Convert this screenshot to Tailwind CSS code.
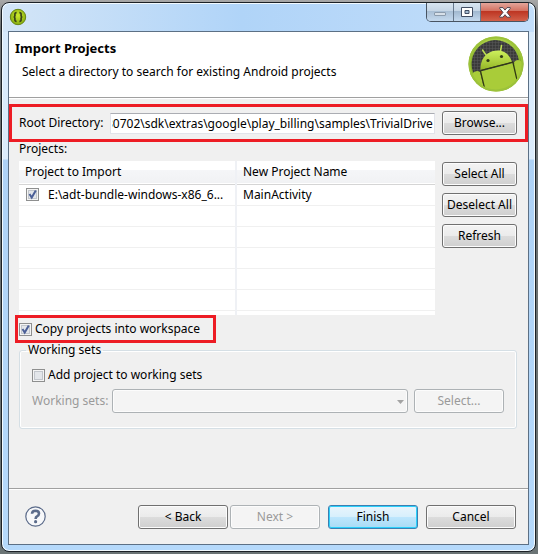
<!DOCTYPE html>
<html lang="en">
<head>
    <meta charset="UTF-8">
    <meta name="viewport" content="width=device-width, initial-scale=1.0">
    <title>Import Projects</title>
    <script src="https://cdn.jsdelivr.net/npm/@tailwindcss/browser@4"></script>
</head>
<body class="min-h-screen flex flex-col pt-[2px] pb-[2px] pl-px pr-[2px] bg-linear-to-b from-[#a8a8a8] via-[#6b6f70] via-5% to-[#6b7475] font-['Noto_Sans',sans-serif] text-[13px] leading-4 text-black">

    <!-- window frame -->
    <div class="flex-1 flex flex-col rounded-lg border border-[#1c2126] px-[6px] pb-[6px] bg-[linear-gradient(#d6e9fb_0,#dcecfb_156px,#aed2f6_157px,#b5d9fb_100%)] shadow-[inset_0_0_0_1px_#f2faff]">

        <header class="h-7 flex items-start justify-between pl-[6px] pr-[5px] -mx-[5px] mt-px -mb-px rounded-t-lg bg-linear-to-r from-[#d3e5f7] via-[#b0d4f8] via-45% to-[#c3defa]">
            <svg class="w-[18px] h-[18px] mt-1" viewBox="0 0 18 18" aria-hidden="true">
                <defs>
                    <radialGradient id="badge" cx=".5" cy=".4" r=".6">
                        <stop offset="0" stop-color="#cdea2c"/>
                        <stop offset="1" stop-color="#86ac10"/>
                    </radialGradient>
                </defs>
                <circle cx="9" cy="9" r="7.7" fill="url(#badge)" stroke="#688613"/>
                <path d="M7.6 4.6Q5.8 4.6 5.9 6.4V7.7Q5.9 8.9 4.7 9Q5.9 9.1 5.9 10.3V11.6Q5.8 13.4 7.6 13.4M10.4 4.6Q12.2 4.6 12.1 6.4V7.7Q12.1 8.9 13.3 9Q12.1 9.1 12.1 10.3V11.6Q12.2 13.4 10.4 13.4" fill="none" stroke="#394318" stroke-width="1.7"/>
            </svg>
            <div class="flex h-[19px] -mt-px rounded-b-[5px] border border-t-0 border-[#485462] overflow-hidden">
                <button aria-label="Minimize" class="w-[27px] flex items-center justify-center bg-[linear-gradient(#d8e5f1,#c5d5e5_45%,#a9bfd5_46%,#c4d9ee)] border-r border-[#66788c]">
                    <svg class="w-3 h-3" viewBox="0 0 12 12"><rect x=".5" y="6.5" width="11" height="3" rx=".5" fill="#d7e0e9" stroke="#8c9cad"/></svg>
                </button>
                <button aria-label="Maximize" class="w-[27px] flex items-center justify-center bg-[linear-gradient(#d8e5f1,#c5d5e5_45%,#a1b8cf_46%,#c4d9ee)] border-r border-[#66788c]">
                    <svg class="w-3 h-[11px]" viewBox="0 0 12 11"><path d="M.5.5H11.5V9.5H.5ZM4 3.5H8V6.5H4Z" fill="#fff" fill-rule="evenodd" stroke="#414d63"/></svg>
                </button>
                <button aria-label="Close" class="w-[47px] flex items-center justify-center bg-[linear-gradient(#e3a59a,#d3705f_45%,#bd3522_46%,#d2614a)]">
                    <svg class="w-3 h-[11px]" viewBox="0 0 12 11"><path d="M.7.6H4L6 3.1 8 .6H11.3V1.4L8 5.4 11.3 9.4V10.2H8L6 7.7 4 10.2H.7V9.4L4 5.4.7 1.4Z" fill="#fff" stroke="#50444f"/></svg>
                </button>
            </div>
        </header>

        <main class="flex-1 flex flex-col border border-[#5c7085] bg-[#f0f0f0]">

            <!-- banner -->
            <section class="h-[66px] flex justify-between bg-white border-b border-[#a0a0a0]">
                <div class="pl-[6px] pt-2">
                    <h1 class="font-bold">Import Projects</h1>
                    <p class="pl-[7px] pt-2 text-[12px]">Select a directory to search for existing Android projects</p>
                </div>
                <svg class="w-14 h-14 mt-1 mr-1" viewBox="0 0 56 56" role="img" aria-label="Android">
                    <defs>
                        <linearGradient id="ring" x2="0" y2="1">
                            <stop offset="0" stop-color="#b0d54c"/>
                            <stop offset=".5" stop-color="#84af24"/>
                            <stop offset="1" stop-color="#9cbc2b"/>
                        </linearGradient>
                        <linearGradient id="robot" x2="0" y2="1">
                            <stop offset="0" stop-color="#cdf05c"/>
                            <stop offset="1" stop-color="#94b526"/>
                        </linearGradient>
                        <pattern id="mesh" width="3" height="3" patternUnits="userSpaceOnUse">
                            <rect width="3" height="3" fill="#3a3a3a"/>
                            <path d="M0 0H3M0 0V3" stroke="#5a5a5a"/>
                        </pattern>
                        <clipPath id="disc"><circle cx="28" cy="28" r="27"/></clipPath>
                    </defs>
                    <circle cx="28" cy="28" r="27.5" fill="url(#ring)"/>
                    <path d="M5 36A23.8 23.8 0 1 1 51 25L46 28 16 50Z" fill="url(#mesh)"/>
                    <g clip-path="url(#disc)">
                        <path d="M18 19L14.500 14M32.500 15L33.500 9.500" stroke="#bde052" stroke-width="1.500" stroke-linecap="round"/>
                        <path d="M12.500 34C12 23 18 17 25 15C34 13 41 17 44 26Z" fill="url(#robot)"/>
                        <path d="M12.500 35.500L45 27L51 56H17Z" fill="#a9cc39"/>
                        <path d="M4 38Q8 33 12 36L17 56H3ZM46 26Q50 22 54 26V46L50 47Z" fill="#a9cc39"/>
                        <path d="M12.500 34.500L45 26M12.500 35L17 54M44.800 26L49 44" stroke="#303814" stroke-width="1.200" fill="none"/>
                        <circle cx="20" cy="24.500" r="1.600" fill="#303a16"/>
                        <circle cx="33.500" cy="20.500" r="1.600" fill="#303a16"/>
                    </g>
                    <circle cx="28" cy="28" r="26.500" fill="none" stroke="#9cc23a" stroke-width="2"/>
                </svg>
            </section>

            <div class="flex-1 flex flex-col border-t border-white">

                <div class="mt-[5px] h-[38px] flex items-center border-[3px] border-[#ed1c24] pl-[7px] pr-2">
                    <label for="root" class="w-[91px] whitespace-nowrap text-[12px]">Root Directory:</label>
                    <input id="root" type="text" value="E:\adt-bundle-windows-x86_64-20130702\sdk\extras\google\play_billing\samples\TrivialDrive" class="flex-1 min-w-0 h-[21px] px-px bg-white border border-[#e2e3ea] border-t-[#abadb3] text-[12px]">
                    <button class="w-[75px] h-6 ml-[7px] rounded-[3px] border border-[#707070] bg-[linear-gradient(#f3f3f3,#ebebeb_50%,#dcdcdc_51%,#cfcfcf)] shadow-[inset_0_0_0_1px_#fcfcfc] text-[12px]">Browse...</button>
                </div>

                <div class="pl-[10px] pr-[11px] text-[12px]">
                    <p id="projects" class="h-[19px] leading-[14px]">Projects:</p>
                    <div class="flex gap-[7px]">
                        <div class="flex-1 min-w-0 h-[154px] overflow-hidden">
                            <table aria-labelledby="projects" class="w-full table-fixed border-collapse bg-white">
                                <thead>
                                    <tr class="h-[23px] bg-[linear-gradient(#fff_40%,#f5f6f8_41%,#f1f2f4)] border-b border-[#d5d5d5] text-left">
                                        <th class="w-[217px] pl-[6px] font-normal border-r-2 border-[#eff1f5]">Project to Import</th>
                                        <th class="pl-[6px] font-normal">New Project Name</th>
                                    </tr>
                                </thead>
                                <tbody>
                                    <tr class="h-[21px] border-b border-[#f0f0f0]">
                                        <td class="pl-[7px] border-r-2 border-[#eff1f5]">
                                            <label class="flex items-center gap-[9px]">
                                                <input type="checkbox" checked class="sr-only">
                                                <svg class="w-[13px] h-[13px]" viewBox="0 0 13 13"><rect x=".5" y=".5" width="12" height="12" fill="#f4f4f4" stroke="#8e8f8f"/><rect x="2.500" y="2.500" width="8" height="8" fill="#e3e6ea" stroke="#c2c6cc"/><path d="M3.500 6L5.700 9.500L9.800 2.500" fill="none" stroke="#4b5f97" stroke-width="2"/></svg>
                                                E:\adt-bundle-windows-x86_6...
                                            </label>
                                        </td>
                                        <td class="pl-[6px]">MainActivity</td>
                                    </tr>
                                    <tr class="h-[21px] border-b border-[#f0f0f0]"><td class="border-r-2 border-[#eff1f5]"></td><td></td></tr>
                                    <tr class="h-[21px] border-b border-[#f0f0f0]"><td class="border-r-2 border-[#eff1f5]"></td><td></td></tr>
                                    <tr class="h-[21px] border-b border-[#f0f0f0]"><td class="border-r-2 border-[#eff1f5]"></td><td></td></tr>
                                    <tr class="h-[21px] border-b border-[#f0f0f0]"><td class="border-r-2 border-[#eff1f5]"></td><td></td></tr>
                                    <tr class="h-[21px] border-b border-[#f0f0f0]"><td class="border-r-2 border-[#eff1f5]"></td><td></td></tr>
                                    <tr class="h-[21px]"><td class="border-r-2 border-[#eff1f5]"></td><td></td></tr>
                                </tbody>
                            </table>
                        </div>
                        <div class="w-[75px] pt-px flex flex-col gap-[7px]">
                            <button class="h-6 rounded-[3px] border border-[#707070] bg-[linear-gradient(#f3f3f3,#ebebeb_50%,#dcdcdc_51%,#cfcfcf)] shadow-[inset_0_0_0_1px_#fcfcfc]">Select All</button>
                            <button class="h-6 rounded-[3px] border border-[#707070] bg-[linear-gradient(#f3f3f3,#ebebeb_50%,#dcdcdc_51%,#cfcfcf)] shadow-[inset_0_0_0_1px_#fcfcfc] whitespace-nowrap">Deselect All</button>
                            <button class="h-6 rounded-[3px] border border-[#707070] bg-[linear-gradient(#f3f3f3,#ebebeb_50%,#dcdcdc_51%,#cfcfcf)] shadow-[inset_0_0_0_1px_#fcfcfc]">Refresh</button>
                        </div>
                    </div>

                    <label class="w-[201px] h-7 -ml-1 flex items-center gap-[3px] pl-px border-[3px] border-[#ed1c24] whitespace-nowrap">
                        <input type="checkbox" checked class="sr-only">
                        <svg class="w-[13px] h-[13px]" viewBox="0 0 13 13"><rect x=".5" y=".5" width="12" height="12" fill="#f4f4f4" stroke="#8e8f8f"/><rect x="2.500" y="2.500" width="8" height="8" fill="#e3e6ea" stroke="#c2c6cc"/><path d="M3.500 6L5.700 9.500L9.800 2.500" fill="none" stroke="#4b5f97" stroke-width="2"/></svg>
                        Copy projects into workspace
                    </label>

                    <fieldset class="h-[86px] rounded-[3px] border border-[#d5dfe5] px-3 shadow-[inset_0_0_0_1px_#fff]">
                        <legend class="-ml-[6px] px-[2px] leading-[14px]">Working sets</legend>
                        <label class="flex items-center gap-[3px] h-4 mt-[10px]">
                            <input type="checkbox" class="sr-only">
                            <svg class="w-[13px] h-[13px]" viewBox="0 0 13 13"><rect x=".5" y=".5" width="12" height="12" fill="#f4f4f4" stroke="#8e8f8f"/><rect x="2.500" y="2.500" width="8" height="8" fill="#e3e6ea" stroke="#c2c6cc"/></svg>
                            Add project to working sets
                        </label>
                        <div class="mt-[6px] flex items-center text-[#9a9a9a]">
                            <label for="sets" class="w-20 whitespace-nowrap">Working sets:</label>
                            <div class="relative flex-1">
                                <select id="sets" disabled class="block w-full h-6 appearance-none rounded-[3px] border border-[#adb2b5] bg-[#f4f4f4] shadow-[inset_0_0_0_1px_#fcfcfc]"></select>
                                <svg class="absolute right-1 top-[11px] w-[7px] h-1 pointer-events-none" viewBox="0 0 7 4"><path d="M0 0H7L3.500 4Z" fill="#a3a3a3"/></svg>
                            </div>
                            <button disabled class="w-[90px] h-6 ml-[6px] rounded-[3px] border border-[#adb2b5] bg-[#f4f4f4] shadow-[inset_0_0_0_1px_#fcfcfc]">Select...</button>
                        </div>
                    </fieldset>
                </div>

                <!-- footer -->
                <footer class="mt-auto h-14 flex items-center border-t border-[#a0a0a0] shadow-[inset_0_1px_0_#fff] pl-4 pr-3 text-[12px]">
                    <button aria-label="Help" class="mr-auto">
                        <svg class="w-[21px] h-[21px]" viewBox="0 0 21 21"><circle cx="10.500" cy="10.500" r="9.700" fill="#f7f8fa" stroke="#5b6b8a" stroke-width="1.200"/><path d="M7 7.800Q7.100 4.800 10.500 4.800Q14 4.900 14 7.500Q13.900 9.300 12.300 10.200Q10.600 11.100 10.600 12.900" fill="none" stroke="#5b6b8a" stroke-width="2.600"/><circle cx="10.600" cy="15.700" r="1.600" fill="#5b6b8a"/></svg>
                    </button>
                    <div class="flex gap-2">
                        <div class="flex gap-[2px]">
                            <button class="w-[90px] h-6 rounded-[3px] border border-[#707070] bg-[linear-gradient(#f3f3f3,#ebebeb_50%,#dcdcdc_51%,#cfcfcf)] shadow-[inset_0_0_0_1px_#fcfcfc]">&lt; Back</button>
                            <button disabled class="w-[90px] h-6 rounded-[3px] border border-[#adb2b5] bg-[#f4f4f4] shadow-[inset_0_0_0_1px_#fcfcfc] text-[#9a9a9a]">Next &gt;</button>
                        </div>
                        <button class="w-[90px] h-6 rounded-[3px] border border-[#3c7fb1] bg-[linear-gradient(#e9f5fc,#d7effc_50%,#bde6fd_51%,#a8dbf5)] shadow-[inset_0_0_0_1px_#2bd0fb]">Finish</button>
                        <button class="w-[90px] h-6 rounded-[3px] border border-[#707070] bg-[linear-gradient(#f3f3f3,#ebebeb_50%,#dcdcdc_51%,#cfcfcf)] shadow-[inset_0_0_0_1px_#fcfcfc]">Cancel</button>
                    </div>
                </footer>
            </div>
        </main>
    </div>

    <script>
        // keep the end of the long path in view
        const root = document.getElementById('root');
        root.scrollLeft = root.scrollWidth;
    </script>
</body>
</html>
